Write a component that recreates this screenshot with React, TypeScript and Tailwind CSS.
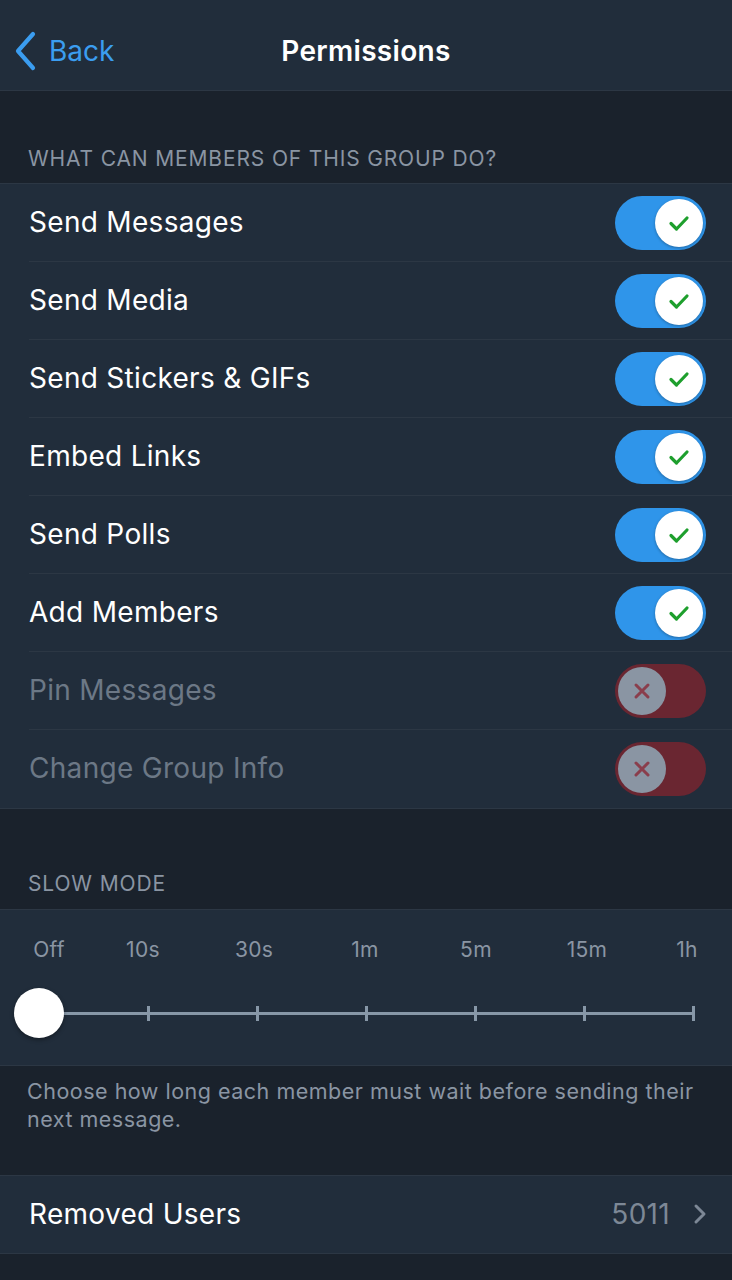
import React from "react";

const font = { fontFamily: "Inter, 'Noto Sans', sans-serif" };

function ToggleOn() {
  return (
    <div className="w-[91px] h-[54px] rounded-full bg-[#2f95ea] flex items-center justify-end pr-[3px]">
      <div className="w-[48px] h-[48px] rounded-full bg-white flex items-center justify-center shadow-[0_1px_3px_rgba(0,0,0,0.3)]">
        <svg width="28" height="28" viewBox="0 0 28 28" fill="none">
          <path d="M6 14.5l5.5 5.5L22 9" stroke="#1e9f2d" strokeWidth="3.2" strokeLinecap="round" strokeLinejoin="round" />
        </svg>
      </div>
    </div>
  );
}

function ToggleOff() {
  return (
    <div className="w-[91px] h-[54px] rounded-full bg-[#6a2631] flex items-center justify-start pl-[3px]">
      <div className="w-[48px] h-[48px] rounded-full bg-[#8a95a3] flex items-center justify-center">
        <svg width="26" height="26" viewBox="0 0 26 26" fill="none">
          <path d="M7 7l12 12M19 7L7 19" stroke="#8a3e4c" strokeWidth="3" strokeLinecap="round" />
        </svg>
      </div>
    </div>
  );
}

const perms: [string, boolean][] = [
  ["Send Messages", true],
  ["Send Media", true],
  ["Send Stickers & GIFs", true],
  ["Embed Links", true],
  ["Send Polls", true],
  ["Add Members", true],
  ["Pin Messages", false],
  ["Change Group Info", false],
];

const labels = [
  ["Off", 49],
  ["10s", 143],
  ["30s", 254],
  ["1m", 365],
  ["5m", 476],
  ["15m", 587],
  ["1h", 687],
] as const;

const ticks = [148, 257, 366, 475, 584, 693];

export default function App() {
  return (
    <div className="w-[732px] h-[1280px] bg-[#1a222c] overflow-hidden" style={font}>
      {/* Header */}
      <div className="relative h-[91px] bg-[#212d3b] border-b border-[#2c3744] flex items-center pt-[12px]">
        <div className="flex items-center pl-[13px] gap-[12px] text-[#3b9df0]">
          <svg width="24" height="40" viewBox="0 0 24 40" fill="none">
            <path d="M20 3L5 20l15 17" stroke="#3b9df0" strokeWidth="4.2" strokeLinecap="round" strokeLinejoin="round" />
          </svg>
          <span className="text-[28px] leading-none">Back</span>
        </div>
        <div className="absolute left-0 right-0 top-[12px] h-[78px] flex items-center justify-center pointer-events-none">
          <span className="text-[28px] font-semibold text-white leading-none tracking-[0.3px]">Permissions</span>
        </div>
      </div>

      {/* Section header */}
      <div className="h-[92px] flex items-end pb-[14px] pl-[28px]">
        <span className="text-[21px] text-[#8a95a3] leading-none tracking-[0.85px]">WHAT CAN MEMBERS OF THIS GROUP DO?</span>
      </div>

      {/* Permissions list */}
      <div className="bg-[#212d3b] border-t border-b border-[#2c3744]">
        {perms.map(([label, on], i) => (
          <div key={label} className="pl-[29px]">
            <div
              className={
                "h-[78px] flex items-center justify-between pr-[26px] " +
                (i < perms.length - 1 ? "border-b border-[#2c3744]" : "")
              }
            >
              <span
                className={
                  "text-[28px] leading-none tracking-[0.3px] -mt-[2px] " +
                  (on ? "text-white" : "text-[#6c7886]")
                }
              >
                {label}
              </span>
              {on ? <ToggleOn /> : <ToggleOff />}
            </div>
          </div>
        ))}
      </div>

      {/* Slow mode header */}
      <div className="h-[100px] flex items-end pb-[15px] pl-[28px]">
        <span className="text-[21px] text-[#8a95a3] leading-none tracking-[0.85px]">SLOW MODE</span>
      </div>

      {/* Slider */}
      <div className="bg-[#212d3b] border-t border-b border-[#2c3744] h-[157px] relative">
        {labels.map(([t, x]) => (
          <span
            key={t}
            className="absolute top-[29px] text-[21px] text-[#8a95a3] leading-none -translate-x-1/2 tracking-[0.3px]"
            style={{ left: x }}
          >
            {t}
          </span>
        ))}
        <div className="absolute left-[39px] w-[655px] top-[102px] h-[3px] bg-[#8797a7]" />
        {ticks.map((x) => (
          <div key={x} className="absolute top-[96px] w-[3px] h-[15px] bg-[#8797a7]" style={{ left: x - 1 }} />
        ))}
        <div className="absolute left-[14px] top-[78px] w-[50px] h-[50px] rounded-full bg-white shadow-[0_2px_4px_rgba(0,0,0,0.35)]" />
      </div>

      {/* Footer text */}
      <div className="pl-[27px] pr-[16px] pt-[11px] h-[109px]">
        <p className="text-[21.5px] leading-[28px] text-[#8a95a3] tracking-[0.5px]">
          Choose how long each member must wait before sending their next message.
        </p>
      </div>

      {/* Removed users */}
      <div className="bg-[#212d3b] border-t border-b border-[#2c3744] h-[79px] flex items-center justify-between pl-[29px] pr-[25px]">
        <span className="text-[28px] text-white leading-none tracking-[0.3px] -mt-[2px]">Removed Users</span>
        <div className="flex items-center gap-[23px] -mt-[2px]">
          <span className="text-[28px] text-[#7d8896] leading-none tracking-[0.3px]">5011</span>
          <svg width="14" height="22" viewBox="0 0 14 22" fill="none">
            <path d="M3 3l8 8-8 8" stroke="#7d8896" strokeWidth="3" strokeLinecap="round" strokeLinejoin="round" />
          </svg>
        </div>
      </div>
    </div>
  );
}
